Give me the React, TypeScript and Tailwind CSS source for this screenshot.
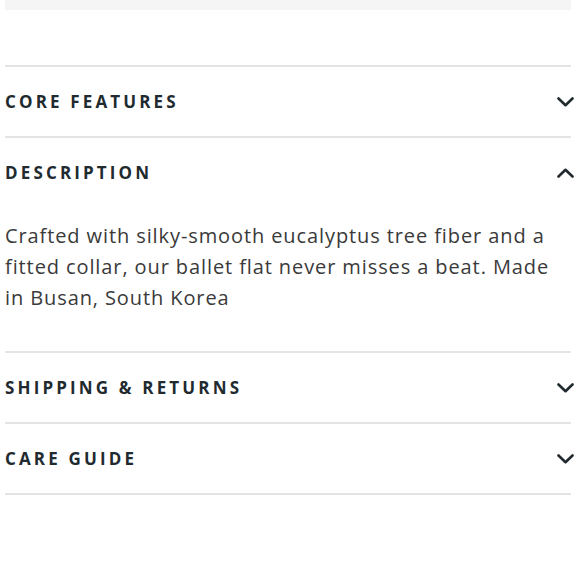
import React, { useState } from "react"

type Section = {
  title: string
  body?: string
}

const sections: Section[] = [
  { title: "CORE FEATURES" },
  {
    title: "DESCRIPTION",
    body: "Crafted with silky-smooth eucalyptus tree fiber and a fitted collar, our ballet flat never misses a beat. Made in Busan, South Korea",
  },
  { title: "SHIPPING & RETURNS" },
  { title: "CARE GUIDE" },
]

const Chevron = ({ up }: { up: boolean }) => (
  <svg width="17" height="10" viewBox="0 0 17 10" fill="none" className="-mr-[3px]">
    <path
      d={up ? "M1.5 8.5 L8.5 1.8 L15.5 8.5" : "M1.5 1.5 L8.5 8.2 L15.5 1.5"}
      stroke="#212a2f"
      strokeWidth="2.6"
      strokeLinecap="round"
      strokeLinejoin="round"
    />
  </svg>
)

export default function App() {
  const [open, setOpen] = useState<string>("DESCRIPTION")

  return (
    <div className="min-h-[580px] w-[580px] bg-white px-[5px] font-['Open_Sans','Noto_Sans',sans-serif] text-[#212a2f]">
      <div className="h-[10px] w-[566px] bg-[#f5f5f5]" />
      <div className="mt-[55px] w-[566px] border-t-2 border-[#e4e4e4]">
        {sections.map((s) => {
          const isOpen = open === s.title
          return (
            <div key={s.title} className="border-b-2 border-[#e4e4e4]">
              <button
                onClick={() => setOpen(isOpen ? "" : s.title)}
                className="flex h-[69px] w-full items-center justify-between text-left"
              >
                <span className="text-[17px] font-bold tracking-[0.185em]">{s.title}</span>
                <Chevron up={isOpen} />
              </button>
              {isOpen && s.body && (
                <p className="pb-[38px] pt-[13px] text-[20px] leading-[31px] tracking-[0.045em] text-[#3a3a3a]">
                  {s.body}
                </p>
              )}
            </div>
          )
        })}
      </div>
    </div>
  )
}
